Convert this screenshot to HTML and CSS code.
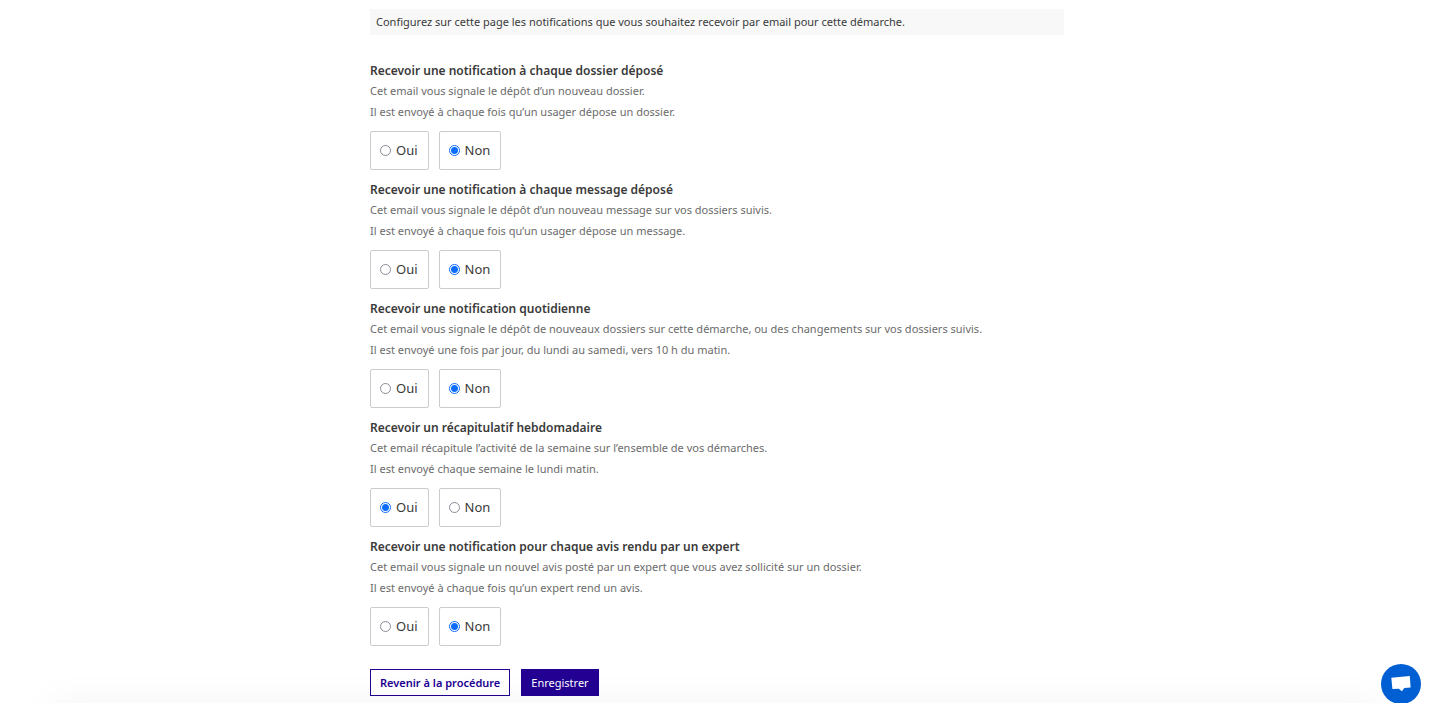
FILE: index.html
```
<!DOCTYPE html>
<html lang="fr">
<head>
<meta charset="utf-8">
<meta name="viewport" content="width=device-width, initial-scale=1">
<title>Notifications par email</title>
<link rel="stylesheet" href="styles.css">
</head>
<body>
<main class="page">
  <p class="notice">Configurez sur cette page les notifications que vous souhaitez recevoir par email pour cette démarche.</p>
  <form class="form">
    <fieldset class="group">
      <legend class="title">Recevoir une notification à chaque dossier déposé</legend>
      <p class="desc">Cet email vous signale le dépôt d’un nouveau dossier.</p>
      <p class="desc">Il est envoyé à chaque fois qu’un usager dépose un dossier.</p>
      <div class="choices">
        <label class="choice"><input class="radio" type="radio" name="dossier" value="oui">Oui</label>
        <label class="choice"><input class="radio" type="radio" name="dossier" value="non" checked>Non</label>
      </div>
    </fieldset>
    <fieldset class="group">
      <legend class="title">Recevoir une notification à chaque message déposé</legend>
      <p class="desc">Cet email vous signale le dépôt d’un nouveau message sur vos dossiers suivis.</p>
      <p class="desc">Il est envoyé à chaque fois qu’un usager dépose un message.</p>
      <div class="choices">
        <label class="choice"><input class="radio" type="radio" name="message" value="oui">Oui</label>
        <label class="choice"><input class="radio" type="radio" name="message" value="non" checked>Non</label>
      </div>
    </fieldset>
    <fieldset class="group">
      <legend class="title">Recevoir une notification quotidienne</legend>
      <p class="desc">Cet email vous signale le dépôt de nouveaux dossiers sur cette démarche, ou des changements sur vos dossiers suivis.</p>
      <p class="desc">Il est envoyé une fois par jour, du lundi au samedi, vers 10 h du matin.</p>
      <div class="choices">
        <label class="choice"><input class="radio" type="radio" name="quotidien" value="oui">Oui</label>
        <label class="choice"><input class="radio" type="radio" name="quotidien" value="non" checked>Non</label>
      </div>
    </fieldset>
    <fieldset class="group">
      <legend class="title">Recevoir un récapitulatif hebdomadaire</legend>
      <p class="desc">Cet email récapitule l’activité de la semaine sur l’ensemble de vos démarches.</p>
      <p class="desc">Il est envoyé chaque semaine le lundi matin.</p>
      <div class="choices">
        <label class="choice"><input class="radio" type="radio" name="hebdo" value="oui" checked>Oui</label>
        <label class="choice"><input class="radio" type="radio" name="hebdo" value="non">Non</label>
      </div>
    </fieldset>
    <fieldset class="group">
      <legend class="title">Recevoir une notification pour chaque avis rendu par un expert</legend>
      <p class="desc">Cet email vous signale un nouvel avis posté par un expert que vous avez sollicité sur un dossier.</p>
      <p class="desc">Il est envoyé à chaque fois qu’un expert rend un avis.</p>
      <div class="choices">
        <label class="choice"><input class="radio" type="radio" name="expert" value="oui">Oui</label>
        <label class="choice"><input class="radio" type="radio" name="expert" value="non" checked>Non</label>
      </div>
    </fieldset>
    <div class="actions">
      <a class="button" href="#">Revenir à la procédure</a>
      <button class="button primary" type="submit">Enregistrer</button>
    </div>
  </form>
</main>
<div class="bottom-shade"></div>
<button class="chat" type="button" aria-label="Ouvrir la messagerie">
  <svg class="chat-icon" viewBox="0 0 20 18" aria-hidden="true"><path d="M.3 2.8 18.8 1l.8 11.6-6.3.5-2.4 3.2-3.1-2.6-6.4.4z" fill="#fff"/></svg>
</button>
</body>
</html>
```
FILE: styles.css
```
* {
  box-sizing: border-box;
}

body {
  margin: 0;
  background: #fff;
  color: #3a3a3a;
  font-family: "Noto Sans", "Open Sans", sans-serif;
  font-size: 11px;
}

.page {
  max-width: 697px;
  margin: 0 auto;
  padding: 9px 0 7px 3px;
}

.notice {
  margin: 0 0 26px;
  padding: 2px 6px;
  background: #f8f8f8;
  line-height: 22px;
}

.group {
  min-width: 0;
  margin: 0 0 10px;
  padding: 0;
  border: 0;
}

.title {
  padding: 0;
  font-size: 12px;
  font-weight: 600;
  line-height: 19px;
}

.desc {
  margin: 0;
  color: #6b6b6b;
  line-height: 21px;
}

.choices {
  display: flex;
  gap: 10px;
  padding-top: 9px;
}

.choice {
  display: flex;
  align-items: center;
  gap: 5px;
  padding: 8px 10px 8px 9px;
  border: 1px solid #ccc;
  border-radius: 2px;
  font-size: 13px;
  line-height: 21px;
}

.radio {
  appearance: none;
  width: 11px;
  height: 11px;
  margin: 0;
  border: 1px solid #8b8b99;
  border-radius: 50%;
  background: #fff;
}

.radio:checked {
  border-color: #0b6cff;
  background: radial-gradient(circle, #0b6cff 3px, #fff 4px);
}

.actions {
  display: flex;
  gap: 11px;
  padding-top: 13px;
}

.button {
  padding: 2px 9px;
  border: 1px solid #230092;
  background: #fff;
  color: #230092;
  font-family: inherit;
  font-size: 11px;
  font-weight: 600;
  line-height: 21px;
  text-decoration: none;
}

.primary {
  background: #230092;
  color: #fff;
  font-weight: 400;
}

.bottom-shade {
  position: fixed;
  right: 50px;
  bottom: -20px;
  left: 50px;
  height: 20px;
  box-shadow: 0 6px 40px rgba(0, 0, 0, .08);
  pointer-events: none;
}

.chat {
  position: fixed;
  right: 10px;
  bottom: -1px;
  display: grid;
  place-items: center;
  width: 40px;
  height: 40px;
  padding: 0;
  border: 0;
  border-radius: 50%;
  background: #005fd3;
}

.chat-icon {
  width: 20px;
  height: 18px;
}
```
